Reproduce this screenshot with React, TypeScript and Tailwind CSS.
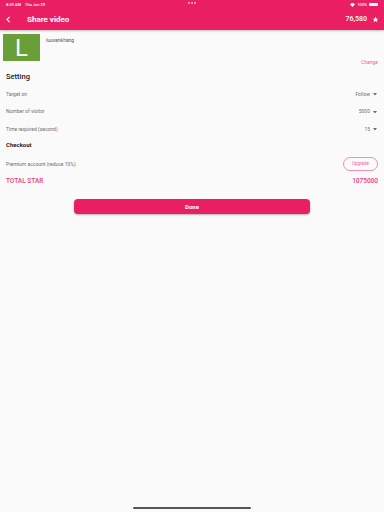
const font = { fontFamily: "Roboto, 'Liberation Sans', sans-serif" };

function Caret() {
  return (
    <svg width="4" height="2.5" viewBox="0 0 5 3" className="ml-[3px]">
      <path d="M0 0 L5 0 L2.5 3 Z" fill="#6b6b6b" />
    </svg>
  );
}

function StatusBar() {
  return (
    <div className="relative flex h-[9px] items-center justify-between px-[6px] text-[4px] text-white">
      <div className="flex gap-[4px] font-medium">
        <span>8:39 AM</span>
        <span>Thu Jun 29</span>
      </div>
      <div className="absolute left-[188px] top-[2px] flex gap-[1px]">
        <span className="h-[2px] w-[2px] rounded-full bg-white/70" />
        <span className="h-[2px] w-[2px] rounded-full bg-white/70" />
        <span className="h-[2px] w-[2px] rounded-full bg-white/70" />
      </div>
      <div className="flex items-center gap-[2px] font-medium">
        <svg width="5" height="4" viewBox="0 0 10 8">
          <path d="M5 8 L0 2.5 A7 7 0 0 1 10 2.5 Z" fill="white" />
        </svg>
        <span>100%</span>
        <span className="h-[3px] w-[9px] rounded-[1px] bg-white" />
      </div>
    </div>
  );
}

function AppBar() {
  return (
    <div className="flex h-[21px] items-center px-[4px] text-white">
      <svg width="9" height="9" viewBox="0 0 24 24" className="mr-[14px]">
        <path d="M15 5 L8 12 L15 19" stroke="white" strokeWidth="3" fill="none" />
      </svg>
      <span className="text-[8px] font-bold">Share video</span>
      <div className="ml-auto flex items-center gap-[5px] pr-[1px]">
        <span className="text-[7px] font-medium">76,580</span>
        <svg width="7" height="7" viewBox="0 0 24 24">
          <path d="M12 2 L15 9 L22 9.5 L16.5 14 L18.5 21.5 L12 17.5 L5.5 21.5 L7.5 14 L2 9.5 L9 9 Z" fill="white" />
        </svg>
      </div>
    </div>
  );
}

function Row({ label, value }: { label: string; value: string }) {
  return (
    <div className="flex h-[17.5px] items-center justify-between px-[6px] text-[5px] text-[#707070]">
      <span>{label}</span>
      <span className="flex items-center pr-[1px]">
        {value}
        <Caret />
      </span>
    </div>
  );
}

export default function App() {
  return (
    <div className="flex h-[512px] w-[384px] flex-col bg-[#fafafa]" style={font}>
      <div className="bg-[#e91e63] shadow-[0_1px_2px_rgba(0,0,0,0.25)]">
        <StatusBar />
        <AppBar />
      </div>

      <div className="flex px-[3px] pt-[4px]">
        <div className="flex h-[27px] w-[37px] items-center justify-center bg-[#689f38] text-[24px] leading-none text-white">
          L
        </div>
        <span className="ml-[6px] mt-[3px] text-[5px] text-[#555]">luuvankhang</span>
      </div>
      <div className="-mt-[2px] flex justify-end px-[6px]">
        <span className="text-[5px] text-[#f06292]">Change</span>
      </div>

      <div className="px-[6px] pt-[4px] text-[7.5px] font-medium text-[#222]">Setting</div>
      <div className="mt-[4px]">
        <Row label="Target on" value="Follow" />
        <Row label="Number of visitor" value="5000" />
        <Row label="Time required (second)" value="15" />
      </div>

      <div className="px-[6px] pt-[2px] text-[6px] font-bold text-[#222]">Checkout</div>
      <div className="mt-[6px] flex h-[18px] items-center justify-between px-[6px] text-[5px] text-[#707070]">
        <span>Premium account (reduce 10%)</span>
        <span className="flex h-[14px] w-[35px] items-center justify-center rounded-full border border-[#f48fb1] text-[4.5px] text-[#ec6a94]">
          Upgrade
        </span>
      </div>

      <div className="mt-[1px] flex h-[16px] items-center justify-between px-[6px] text-[6.5px] font-medium text-[#ec407a]">
        <span>TOTAL STAR</span>
        <span>1075000</span>
      </div>

      <div className="mt-[9px] flex justify-center">
        <button className="flex h-[15px] w-[236px] items-center justify-center rounded-[4px] bg-[#e91e63] text-[6px] font-bold text-white shadow-[0_1px_2px_rgba(0,0,0,0.3)]">
          Done
        </button>
      </div>

      <div className="mt-auto flex justify-center pb-[3px]">
        <span className="h-[2px] w-[118px] rounded-full bg-[#555]" />
      </div>
    </div>
  );
}
